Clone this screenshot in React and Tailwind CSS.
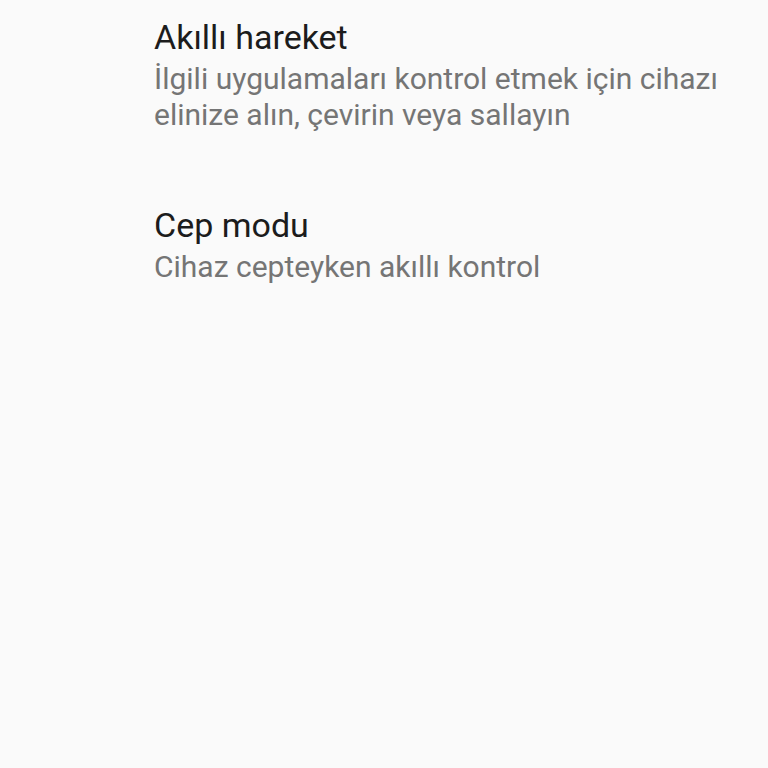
import React from "react";

const items = [
  {
    title: "Akıllı hareket",
    desc: "İlgili uygulamaları kontrol etmek için cihazı elinize alın, çevirin veya sallayın",
  },
  {
    title: "Cep modu",
    desc: "Cihaz cepteyken akıllı kontrol",
  },
];

export default function App() {
  return (
    <div className="w-[768px] h-[768px] bg-[#fafafa] font-['Roboto',sans-serif] overflow-hidden">
      <div className="pl-[154px] pr-[30px] pt-[14px] flex flex-col gap-[69px]">
        {items.map((item) => (
          <div key={item.title} className="flex flex-col">
            <h2 className="text-[34px] leading-[46px] text-[#1c1c1c]">{item.title}</h2>
            <p className="mt-px text-[30px] leading-[36px] text-[#757575]">{item.desc}</p>
          </div>
        ))}
      </div>
    </div>
  );
}
